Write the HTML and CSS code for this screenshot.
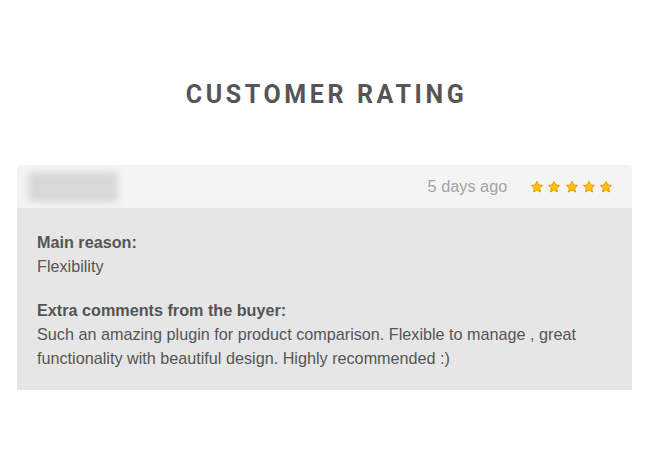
FILE: index.html
```html
<!DOCTYPE html>
<html>
<head>
<meta charset="utf-8">
<link rel="stylesheet" href="styles.css">
</head>
<body>
<div class="page">
  <h1 class="title">CUSTOMER RATING</h1>
  <div class="card">
    <div class="card-head">
      <div class="avatar"></div>
      <div class="meta">
        <span class="date">5 days ago</span>
        <span class="stars">
          <svg class="star" viewBox="0 0 24 24"><path d="M12 2.2l2.9 6.3 6.8.7-5.1 4.6 1.5 6.8L12 17.1l-6.1 3.5 1.5-6.8-5.1-4.6 6.8-.7z"/></svg>
          <svg class="star" viewBox="0 0 24 24"><path d="M12 2.2l2.9 6.3 6.8.7-5.1 4.6 1.5 6.8L12 17.1l-6.1 3.5 1.5-6.8-5.1-4.6 6.8-.7z"/></svg>
          <svg class="star" viewBox="0 0 24 24"><path d="M12 2.2l2.9 6.3 6.8.7-5.1 4.6 1.5 6.8L12 17.1l-6.1 3.5 1.5-6.8-5.1-4.6 6.8-.7z"/></svg>
          <svg class="star" viewBox="0 0 24 24"><path d="M12 2.2l2.9 6.3 6.8.7-5.1 4.6 1.5 6.8L12 17.1l-6.1 3.5 1.5-6.8-5.1-4.6 6.8-.7z"/></svg>
          <svg class="star" viewBox="0 0 24 24"><path d="M12 2.2l2.9 6.3 6.8.7-5.1 4.6 1.5 6.8L12 17.1l-6.1 3.5 1.5-6.8-5.1-4.6 6.8-.7z"/></svg>
        </span>
      </div>
    </div>
    <div class="card-body">
      <div class="block">
        <div class="label">Main reason:</div>
        <div class="text">Flexibility</div>
      </div>
      <div class="block">
        <div class="label">Extra comments from the buyer:</div>
        <div class="text">Such an amazing plugin for product comparison. Flexible to manage , great functionality with beautiful design. Highly recommended :)</div>
      </div>
    </div>
  </div>
</div>
</body>
</html>
```
FILE: styles.css
```css
html, body {
  margin: 0;
  padding: 0;
  background: #ffffff;
}
.page {
  padding: 78px 20px 0 17px;
  font-family: "Liberation Sans", Arial, sans-serif;
}
.title {
  margin: 0 0 53px 0;
  text-align: center;
  font-family: Roboto, "Liberation Sans", sans-serif;
  font-weight: 700;
  font-size: 25px;
  line-height: 34px;
  letter-spacing: 3.6px;
  color: #555555;
  padding-left: 4px;
}
.card {
  width: 615px;
}
.card-head {
  height: 43px;
  background: #f4f4f4;
  border-radius: 4px 4px 0 0;
  display: flex;
  align-items: center;
  justify-content: space-between;
  padding: 0 19px 0 11px;
}
.avatar {
  width: 90px;
  height: 30px;
  background: #d8d8d8;
  border-radius: 4px;
  filter: blur(3px);
}
.meta {
  display: flex;
  align-items: center;
  gap: 23px;
}
.date {
  font-size: 16.3px;
  color: #a3a3a3;
}
.stars {
  display: flex;
  gap: 3.2px;
}
.star {
  width: 14px;
  height: 14px;
  fill: #ffc20e;
  stroke: #e89a00;
  stroke-width: 1.6;
  stroke-linejoin: round;
}
.card-body {
  background: #e6e6e6;
  padding: 22px 20px 20px 20px;
  display: flex;
  flex-direction: column;
  gap: 20px;
}
.label {
  font-weight: 700;
  font-size: 16.2px;
  line-height: 24px;
  color: #555555;
}
.text {
  font-size: 16.2px;
  line-height: 24px;
  color: #555555;
}
```
